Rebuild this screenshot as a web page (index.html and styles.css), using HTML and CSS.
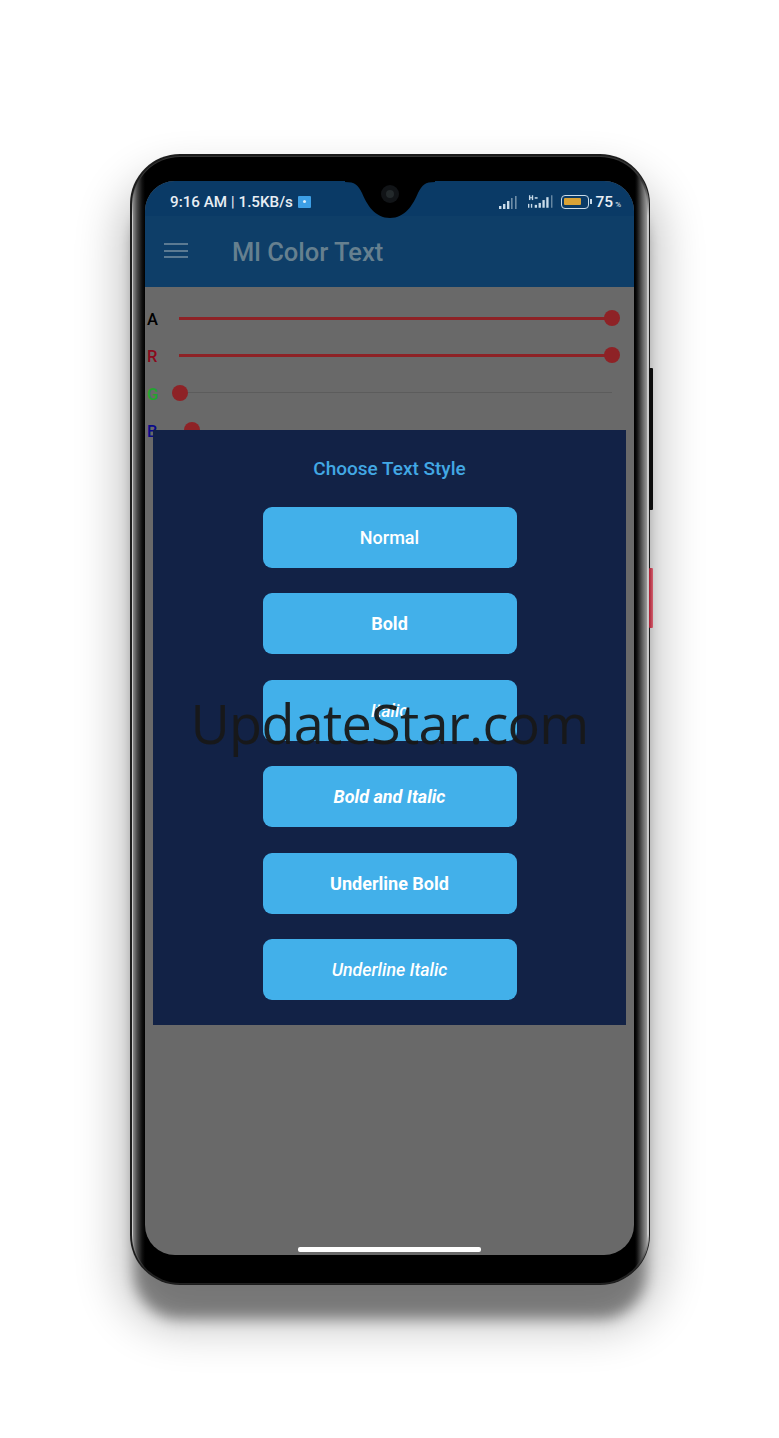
FILE: index.html
```html
<!DOCTYPE html>
<html lang="en">
<head>
<meta charset="utf-8">
<title>Ml Color Text</title>
<link rel="stylesheet" href="styles.css">
</head>
<body>
<main class="stage">
  <div class="phone">
    <span class="key key-power"></span>
    <span class="key key-volume"></span>
    <div class="screen">
      <header class="status">
        <div class="status-left">
          <span class="clock">9:16 AM</span><span class="sep">|</span><span class="speed">1.5KB/s</span>
          <span class="badge"></span>
        </div>
        <div class="status-right">
          <svg class="sig" viewBox="0 0 20 14" width="20" height="14"><g fill="#c9dbe9"><rect x="1" y="11" width="2.4" height="3"/><rect x="5" y="9" width="2.4" height="5"/><rect x="9" y="6" width="2.4" height="8"/></g><g fill="#6f8ea8"><rect x="13" y="3" width="1.6" height="11"/><rect x="17" y="1" width="1.6" height="13"/></g></svg>
          <svg class="sig sig-b" viewBox="0 0 26 15" width="25" height="15"><g fill="#c9dbe9"><rect x="1" y="1" width="1.4" height="5"/><rect x="4" y="1" width="1.4" height="5"/><rect x="2" y="3" width="3" height="1.2"/><rect x="7" y="3" width="3" height="1.6"/><rect x="0" y="10" width="1.4" height="4"/><rect x="3" y="10" width="1.4" height="4"/><rect x="7" y="11" width="2.4" height="3"/><rect x="11" y="9" width="2.4" height="5"/><rect x="15" y="6" width="2.4" height="8"/><rect x="19" y="3" width="2.4" height="11"/></g><rect x="24" y="1" width="1.4" height="13" fill="#6f8ea8"/></svg>
          <span class="battery"><span class="battery-fill"></span></span>
          <span class="percent">75</span><span class="percent-sign">%</span>
        </div>
      </header>
      <div class="appbar">
        <span class="menu"><i></i><i></i><i></i></span>
        <h1 class="app-title">Ml Color Text</h1>
      </div>
      <section class="sliders">
        <div class="row"><span class="ch ch-a">A</span><div class="track on"><span class="thumb end"></span></div></div>
        <div class="row"><span class="ch ch-r">R</span><div class="track on"><span class="thumb end"></span></div></div>
        <div class="row"><span class="ch ch-g">G</span><div class="track"><span class="thumb"></span></div></div>
        <div class="row"><span class="ch ch-b">B</span><div class="track"><span class="thumb near"></span></div></div>
      </section>
      <section class="dialog">
        <h2 class="dialog-title">Choose Text Style</h2>
        <div class="choices">
          <button class="choice">Normal</button>
          <button class="choice bold">Bold</button>
          <button class="choice italic">Italic</button>
          <button class="choice bold italic">Bold and Italic</button>
          <button class="choice bold">Underline Bold</button>
          <button class="choice italic">Underline Italic</button>
        </div>
      </section>
      <span class="home"></span>
    </div>
    <svg class="notch" viewBox="0 0 90 38" width="90" height="38"><path d="M0 0H90V1C80 1 77 4 73 12C68 24 60 37 45 37C30 37 22 24 17 12C13 4 10 1 0 1Z" fill="#000"/><circle cx="45" cy="13" r="9" fill="#111417"/><circle cx="45" cy="13" r="4" fill="#23292b"/></svg>
  </div>
  <div class="watermark">UpdateStar.com</div>
</main>
</body>
</html>
```
FILE: styles.css
```css
* { box-sizing: border-box; }
html, body { margin: 0; background: #fff; }
body { width: 779px; height: 1438px; overflow: hidden; font-family: Roboto, "Liberation Sans", sans-serif; }

.stage { position: relative; height: 1438px; padding: 154px 0 0 130px; }

.phone {
  position: relative;
  width: 520px;
  height: 1131px;
  padding: 27px 15px 30px 15px;
  border-radius: 50px;
  background: #1c1c1c;
  box-shadow: 0 38px 14px -4px rgba(0,0,0,.4), 0 32px 46px 10px rgba(0,0,0,.24);
}
.phone::before {
  content: "";
  position: absolute;
  inset: 1.5px 1.5px 1px;
  border-radius: 48px;
  background: linear-gradient(180deg, #333 0, #333 24px, #c8c8c8 60px, #c8c8c8 calc(100% - 50px), #222 calc(100% - 16px));
}
.phone::after {
  content: "";
  position: absolute;
  inset: 3px 3px 2px;
  border-radius: 47px;
  background: linear-gradient(90deg, #8a8a8a 0, #4a4a4a 4px, #111 9px, #000 12px, #000 502px, #111 504px, #5a5a5a 509px, #9a9a9a 514px);
}

.key { position: absolute; right: -3px; width: 4px; border-radius: 1px; }
.key-power { top: 214px; height: 142px; background: #0c0c0c; }
.key-volume { top: 414px; height: 60px; background: linear-gradient(90deg, #a81c30, #d0606f); }

.screen {
  position: relative;
  z-index: 1;
  height: 1074px;
  width: 489px;
  overflow: hidden;
  border-radius: 30px;
  background: #696969;
}

.notch { position: absolute; z-index: 2; left: 214.5px; top: 27px; display: block; }

.status {
  height: 35px;
  padding: 6px 13px 0 25px;
  display: flex;
  justify-content: space-between;
  align-items: center;
  background: #0a3a66;
  color: #e8eef4;
}
.status-left { display: flex; align-items: center; font-size: 15.2px; font-weight: 500; }
.sep { margin: 0 4px; font-weight: 500; font-size: 14px; }
.badge { width: 13px; height: 12px; margin-left: 5px; background: #3d9fe6; border-radius: 1px; position: relative; }
.badge::after { content: ""; position: absolute; left: 5px; top: 4px; width: 3px; height: 3px; border-radius: 50%; background: #dff0fc; }
.status-right { display: flex; align-items: center; }
.sig { display: block; margin-right: 10px; }
.sig-b { margin-right: 8px; }
.battery { width: 28px; height: 14px; padding: 2px; border: 1.6px solid #c9dbe9; border-radius: 4px; margin-right: 7px; position: relative; }
.battery::after { content: ""; position: absolute; right: -4px; top: 3px; width: 2px; height: 5px; background: #c9dbe9; }
.battery-fill { display: block; width: 17px; height: 7px; background: #d9a236; border-radius: 1px; }
.percent { font-size: 15.5px; font-weight: 500; }
.percent-sign { font-size: 8px; margin-left: 2px; align-self: flex-end; margin-bottom: 2px; }

.appbar { height: 71px; padding-left: 19px; display: flex; align-items: center; background: #0e3e68; }
.menu { width: 24px; display: flex; flex-direction: column; gap: 4.5px; margin-right: 44px; margin-top: -2px; }
.menu i { display: block; height: 2px; background: #5b7a92; }
.app-title { margin: 0; font-size: 25.5px; font-weight: 500; color: #66808f; }

.sliders { padding-top: 12.5px; }
.row { height: 37.3px; display: flex; align-items: center; }
.ch { width: 34px; padding-left: 2px; font-size: 16.5px; font-weight: 500; margin-top: 3px; }
.ch-a { color: #000; }
.ch-r { color: #8b0a1c; }
.ch-g { color: #22a52e; }
.ch-b { color: #0a0a8a; }
.track { position: relative; width: 433px; height: 1px; background: #5c5c5c; }
.track.on { height: 3px; background: #8e2226; }
.thumb { position: absolute; left: -7px; top: 50%; width: 16px; height: 16px; margin-top: -8px; border-radius: 50%; background: #8e2226; }
.thumb.end { left: auto; right: -8px; }
.thumb.near { left: 5px; }

.dialog {
  position: absolute;
  left: 8px;
  top: 249px;
  width: 473px;
  height: 595px;
  background: #122246;
}
.dialog-title { margin: 0; padding-top: 27px; height: 77px; text-align: center; font-size: 19px; font-weight: 500; color: #42a8e4; }
.choices { display: flex; flex-direction: column; align-items: center; gap: 25.4px; }
.choice {
  width: 254px;
  height: 61px;
  padding: 0;
  border: 0;
  border-radius: 9px;
  background: #42b0ea;
  color: #fff;
  font: 500 18px Roboto, "Liberation Sans", sans-serif;
}
.choice.bold { font-weight: 700; }
.choice.italic { font-style: italic; font-weight: 500; font-size: 17.8px; }
.choice.bold.italic { font-weight: 700; font-size: 18px; }

.home { position: absolute; left: 153px; bottom: 3.5px; width: 183px; height: 5px; border-radius: 2px; background: #fff; }

.watermark {
  position: absolute;
  z-index: 3;
  left: 0;
  top: 683px;
  width: 779px;
  text-align: center;
  font-family: "Open Sans", sans-serif;
  font-size: 54px;
  letter-spacing: -0.75px;
  line-height: 80px;
  color: rgba(24,24,24,.95);
}
```
